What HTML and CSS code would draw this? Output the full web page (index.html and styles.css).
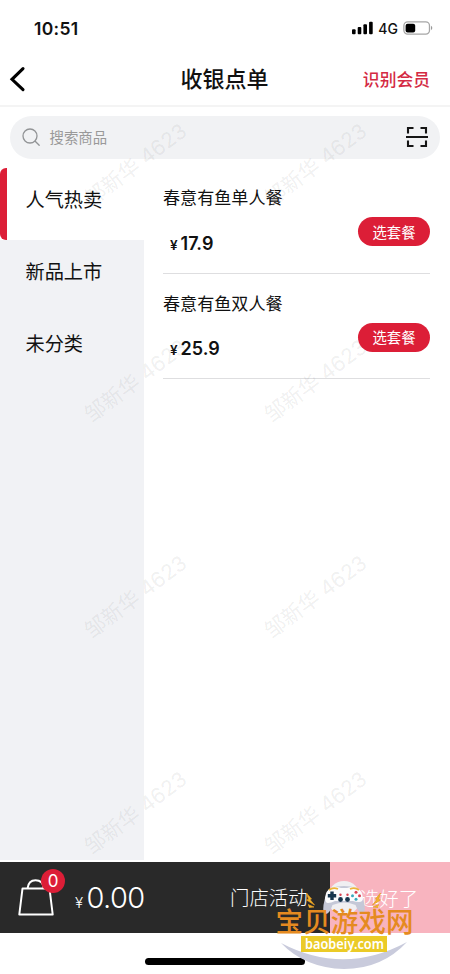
FILE: index.html
```html
<!DOCTYPE html>
<html lang="zh-CN">
<head>
<meta charset="utf-8">
<meta name="viewport" content="width=device-width, initial-scale=1">
<title>收银点单</title>
<link rel="stylesheet" href="styles.css">
</head>
<body>
<div class="app">
  <div class="status">
    <span class="time">10:51</span>
    <div class="status-right">
      <svg class="signal" width="21" height="14" viewBox="0 0 21 14"><rect x="0" y="8.3" width="3.6" height="5" rx="1"/><rect x="5.7" y="6" width="3.6" height="7.3" rx="1"/><rect x="11.4" y="3.3" width="3.6" height="10" rx="1"/><rect x="17.1" y="0.7" width="3.6" height="12.6" rx="1"/></svg>
      <span class="net">4G</span>
      <svg width="30" height="14" viewBox="0 0 30 14"><rect x="0.9" y="0.9" width="25.6" height="12.2" rx="3.8" fill="none" stroke="#a6a6a6" stroke-width="1.3"/><rect x="2.6" y="2.7" width="9.6" height="8.7" rx="2"/><path d="M28 4.8q2.6 2.2 0 4.4z" fill="#999"/></svg>
    </div>
  </div>
  <header class="nav">
    <svg class="back" width="18" height="26" viewBox="0 0 18 26"><path d="M15 2.700 4 13.300 15 23.700" fill="none" stroke="#000" stroke-width="3.1" stroke-linecap="round" stroke-linejoin="miter"/></svg>
    <h1>收银点单</h1>
    <span class="member">识别会员</span>
  </header>
  <div class="search">
    <svg width="19" height="19" viewBox="0 0 19 19"><g fill="none" stroke="#929496" stroke-width="1.3" stroke-linecap="round"><circle cx="8" cy="8" r="7"/><path d="m13.2 13.2 4 4"/></g></svg>
    <span>搜索商品</span>
    <svg class="scan" width="22" height="22" viewBox="0 0 22 22"><path d="M2 7.500V2h5.500M14.500 2H20v5.500M20 14.500V20h-5.500M7.500 20H2v-5.500M0 11h22" fill="none" stroke="#151515" stroke-width="2.100"/></svg>
  </div>
  <main class="content">
    <nav class="side">
      <div class="cat active">人气热卖</div>
      <div class="cat">新品上市</div>
      <div class="cat">未分类</div>
    </nav>
    <section class="products">
      <article class="product">
        <div><h2>春意有鱼单人餐</h2><p class="price"><i>¥</i>17.9</p></div>
        <button class="pick">选套餐</button>
      </article>
      <article class="product">
        <div><h2>春意有鱼双人餐</h2><p class="price"><i>¥</i>25.9</p></div>
        <button class="pick">选套餐</button>
      </article>
    </section>
  </main>
  <footer class="bar">
    <div class="bag">
      <svg width="36" height="37" viewBox="0 0 36 37"><path d="M4.500 9.500h27l3.200 26H1.300zM9.600 9.200C10.200 4.200 13 1.200 17.500 1.200s7.800 3 8.400 8" fill="none" stroke="#fff" stroke-width="2" stroke-linejoin="round"/></svg>
      <b class="badge">0</b>
    </div>
    <div class="total"><i>¥</i>0.00</div>
    <div class="activity">门店活动</div>
    <div class="done">选好了</div>
  </footer>
  <div class="home"><i></i></div>

  <div class="marks">
    <span>邹新华 4623</span><span>邹新华 4623</span>
    <span>邹新华 4623</span><span>邹新华 4623</span>
    <span>邹新华 4623</span><span>邹新华 4623</span>
    <span>邹新华 4623</span><span>邹新华 4623</span>
  </div>

  <svg class="stamp" width="150" height="100" viewBox="270 874 150 100">
    <path d="M281 943Q344 976 407 942Q382 969 344 969Q305 968 281 943z" fill="#c9cbdc"/>
    <ellipse cx="344" cy="898" rx="16.500" ry="17" fill="#f0eff2"/>
    <path d="M331 888q13-4 26 0 5 2 7.500 17 1 8-2 9-4-1-7-9-11-5-23 0-3 9-7 9-3-1-2-9 2.500-15 7.500-17z" fill="#c5c8d7"/>
    <path d="M331 888q5-2 10 0h6q6-2 10 0 5 2 6 10 0 4-4 4-3 0-6-1h-18q-4 2-7 2-3 0-3-5 1-8 6-10z" fill="#fbfbfd"/>
    <path d="M329 890q4-3 9-1M350 889q5-2 9 1" fill="none" stroke="#edb43a" stroke-width="1.800"/>
    <path d="M332 891.500v8.500m-4.200-4.200h8.400" stroke="#17364e" stroke-width="3.400"/>
    <g fill="#17364e"><circle cx="340.500" cy="899.500" r="2.400"/><circle cx="347.500" cy="899.500" r="2.400"/></g>
    <g fill="#d94252"><circle cx="340.500" cy="894.800" r="1.200"/><circle cx="347.500" cy="894.800" r="1.200"/><circle cx="356" cy="892.300" r="1.500"/><circle cx="359.500" cy="895.800" r="1.500"/></g>
    <circle cx="352.500" cy="895.800" r="1.500" fill="#38a9bd"/><circle cx="356" cy="899.300" r="1.500" fill="#38a9bd"/>
    <path d="m306.500 893 5 6-1.500.5 4.500 5.500-8-5 2-.8zM308 904.500l6 2.500-5 .5M380.500 893l-5 6 1.500.5-4.500 5.500 8-5-2-.8zM379 904.500l-6 2.500 5 .5" fill="#f0b42b" stroke="#e49b22" stroke-width=".7"/>
    <text class="stamp-name" x="275.500" y="931.500" textLength="138">宝贝游戏网</text>
    <rect x="301" y="936" width="86" height="16" fill="#ebcb27"/>
    <text class="stamp-url" x="305" y="948.500" textLength="79" lengthAdjust="spacingAndGlyphs">baobeiy.com</text>
  </svg>
</div>
</body>
</html>
```
FILE: styles.css
```css
* { box-sizing: border-box; margin: 0; }
body { background: #fff; color: #111; font-family: "Liberation Sans", "Noto Sans CJK SC", sans-serif; }
i { font-style: normal; }
.app { position: relative; width: 450px; height: 974px; overflow: hidden; display: flex; flex-direction: column; }
.status { height: 52px; padding: 4px 17px 0 34px; display: flex; align-items: center; justify-content: space-between; }
.time { font: 600 17.5px/24px Inter, sans-serif; letter-spacing: 0.3px; padding-top: 1px; }
.status-right { display: flex; align-items: center; }
.net { font: 500 14px/20px Inter, sans-serif; margin: 1px 5px 0 5px; }
.nav { height: 55px; border-bottom: 2px solid #f4f4f4; display: grid; grid-template-columns: 100px 1fr 100px; align-items: center; padding: 1px 20px 0 8px; }
.nav h1 { font-size: 22px; line-height: 32px; font-weight: 500; text-align: center; padding: 2px 0 0 11px; }
.member { color: #d42a43; font-size: 16.800px; font-weight: 500; text-align: right; white-space: nowrap; }
.search { height: 43px; margin: 9px 10px; border-radius: 22px; background: #f1f2f4; display: flex; align-items: center; gap: 8.500px; padding: 0 12px; color: #999; font-size: 14.400px; }
.search span { padding-bottom: 2px; }
.scan { margin: -1px 0 0 auto; }
.content { height: 692px; display: flex; }
.side { width: 144px; background: #f1f2f5; }
.cat { height: 72px; padding: 0 0 11px 25.500px; display: flex; align-items: center; font-size: 19.200px; }
.active { position: relative; background: #fff; }
.active::before { content: ""; position: absolute; left: 0; top: 0; width: 6.500px; height: 72px; background: #dc1e37; border-radius: 6px 0 0 6px; }
.products { flex: 1; padding: 0 20px 0 19px; }
.product { height: 105.500px; border-bottom: 1.500px solid #dedee0; display: flex; justify-content: space-between; padding-top: 18px; }
.product h2 { font-size: 17.100px; line-height: 25px; font-weight: 400; }
.price { font: 600 18px/24px Inter, sans-serif; margin: 20.500px 0 0 7px; }
.price i { font-size: 13.500px; margin-right: 3px; }
.pick { position: relative; z-index: 2; width: 72px; height: 29px; margin-top: 31px; border: 0; border-radius: 15px; background: #dc1e37; color: #fff; font: 14.400px/28px "Noto Sans CJK SC", sans-serif; padding: 0; }
.bar { height: 71px; margin-top: 2px; background: #292929; color: #fff; display: flex; align-items: center; }
.bag { position: relative; width: 36px; height: 37px; margin-left: 18px; }
.badge { position: absolute; left: 23px; top: -10px; width: 24px; height: 24px; border-radius: 50%; background: #dc1e37; font: 400 17px/24px Inter, sans-serif; text-align: center; }
.total { margin-left: 21px; padding-top: 5px; width: 155px; font: 300 29px/36px Inter, sans-serif; letter-spacing: -0.6px; }
.total i { font-size: 15px; margin-right: 4px; }
.activity { width: 100px; font-size: 19.400px; line-height: 28px; white-space: nowrap; font-weight: 300; }
.done { flex: 1; height: 71px; padding: 0 2px 0 0; background: #f8b4bf; display: flex; align-items: center; justify-content: center; font-size: 19.400px; font-weight: 300; }
.home { flex: 1; padding: 25px 145px 0; }
.home i { display: block; height: 7px; border-radius: 4px; background: #000; }
.marks { position: absolute; left: 46px; top: 57px; display: grid; grid-template-columns: 180px 180px; grid-auto-rows: 216px; pointer-events: none; }
.marks span { place-self: center; color: rgba(60, 60, 60, .085); font: 21px/24px Inter, "Noto Sans CJK SC", sans-serif; white-space: nowrap; transform: rotate(-37deg); }
.stamp { position: absolute; left: 270px; top: 874px; z-index: 3; }
.stamp-name { font: 500 27.500px "Noto Sans CJK SC", sans-serif; fill: #e58a20; }
.stamp-url { font: 600 14.500px "Noto Sans", sans-serif; fill: #fff; }
```
